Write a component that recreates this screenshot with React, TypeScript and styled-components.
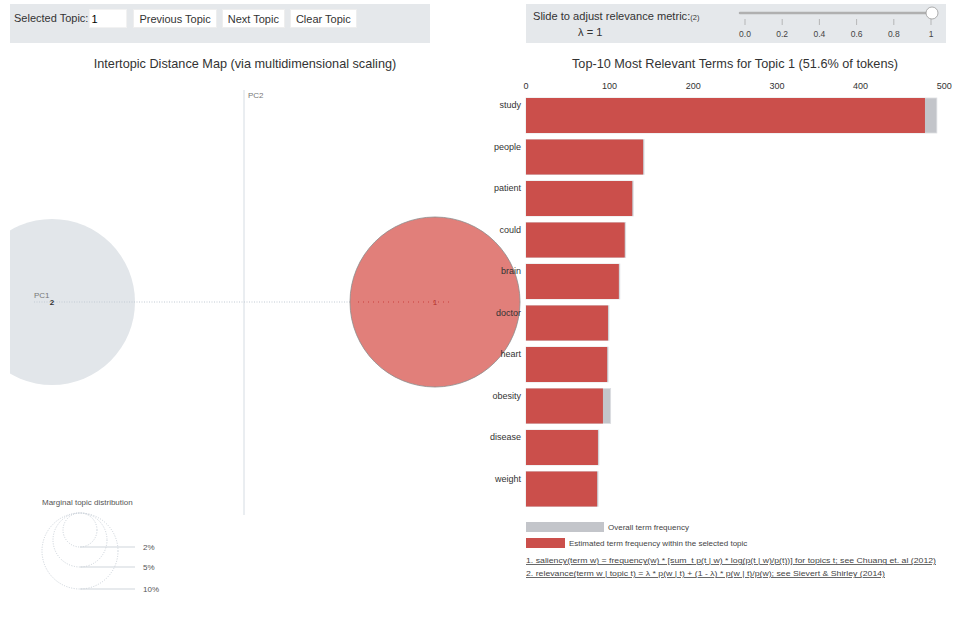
import React from "react";
import styled, { createGlobalStyle } from "styled-components";

const GlobalStyle = createGlobalStyle`
  body {
    margin: 0;
    background: #fff;
    font-family: "Liberation Sans", Arial, sans-serif;
    color: #333;
  }
`;

const Page = styled.div`
  width: 960px;
  height: 620px;
  overflow: hidden;
`;

const Header = styled.div`
  display: flex;
  gap: 96px;
  padding: 4px 0 0 10px;
`;

const ControlPanel = styled.div`
  width: 420px;
  height: 39px;
  box-sizing: border-box;
  background: #e5e8eb;
  display: flex;
  align-items: flex-start;
  padding: 5px 0 0 4px;
`;

const Label = styled.span`
  font-size: 11px;
  line-height: 19px;
  margin-right: 1px;
`;

const TopicInput = styled.input`
  width: 38px;
  height: 19px;
  box-sizing: border-box;
  border: 1px solid #f2f2f2;
  background: #fff;
  font: 11px "Liberation Sans", Arial, sans-serif;
  padding: 0 1px;
  margin-right: 6px;
  outline: none;
`;

const TopicButton = styled.button`
  height: 19px;
  border: 1px solid #eee;
  background: #fff;
  font: 11px "Liberation Sans", Arial, sans-serif;
  color: #333;
  padding: 0 5px;
  margin-right: 5px;
`;

const RelevanceText = styled.div`
  display: flex;
  flex-direction: column;
  padding-left: 3px;
  font-size: 11.1px;
  line-height: 15px;
`;

const Note = styled.span`
  font-size: 7.5px;
`;

const Lambda = styled.span`
  padding-left: 45px;
`;

const SliderSvg = styled.svg`
  display: block;
  margin-left: auto;
  margin-top: -5px;
`;

const Main = styled.div`
  display: flex;
`;

const Column = styled.section<{ $inset: number }>`
  width: 480px;
  box-sizing: border-box;
  padding-left: ${(p) => p.$inset}px;
  display: flex;
  flex-direction: column;
`;

const Title = styled.div<{ $shift: number }>`
  margin-top: 13px;
  height: 16px;
  line-height: 16px;
  text-align: center;
  font-size: 12.7px;
  color: #333;
  padding-left: ${(p) => p.$shift}px;
`;

const PlotSvg = styled.svg`
  display: block;
  overflow: visible;
  font-family: "Liberation Sans", Arial, sans-serif;
`;

const terms: [string, number, number][] = [
  ["study", 477, 490],
  ["people", 140, 140],
  ["patient", 127, 127],
  ["could", 118, 118],
  ["brain", 111, 111],
  ["doctor", 98, 98],
  ["heart", 97, 97],
  ["obesity", 92, 100],
  ["disease", 86, 86],
  ["weight", 85, 85],
];

const X0 = 526;
const SCALE = 0.8364;
const ticks = [0, 0.2, 0.4, 0.6, 0.8, 1];

const Slider = () => (
  <SliderSvg width={210} height={39} viewBox="736 4 210 39">
    <line x1={740} y1={13} x2={930} y2={13} stroke="#b0b0b0" strokeWidth={2.5} strokeLinecap="round" />
    {ticks.map((t, i) => {
      const x = 745 + i * 37.2;
      return (
        <g key={t}>
          <line x1={x} y1={19} x2={x} y2={25} stroke="#aaa" strokeWidth={0.8} />
          <text x={x} y={37} fontSize={8.5} textAnchor="middle" fill="#444">
            {t === 0 ? "0.0" : t === 1 ? "1" : t.toFixed(1)}
          </text>
        </g>
      );
    })}
    <circle cx={932} cy={13} r={6} fill="#fff" stroke="#999" strokeWidth={0.8} />
  </SliderSvg>
);

const TopicMap = () => (
  <PlotSvg width={470} height={530} viewBox="10 72 470 530">
    <defs>
      <clipPath id="mapClip">
        <rect x={10} y={72} width={600} height={530} />
      </clipPath>
    </defs>
    <line x1={244} y1={90} x2={244} y2={515} stroke="#d5dce3" strokeWidth={1} />
    <text x={248} y={98} fontSize={8} fill="#777">PC2</text>
    <circle cx={52} cy={302} r={83} fill="#e2e6ea" clipPath="url(#mapClip)" />
    <line x1={34} y1={302} x2={480} y2={302} stroke="#c2cbd4" strokeWidth={1} strokeDasharray="1 1.5" />
    <text x={34} y={298} fontSize={8} fill="#777">PC1</text>
    <text x={52} y={305} fontSize={8} fontWeight="bold" fill="#333" textAnchor="middle">2</text>
    <circle cx={435} cy={302} r={85} fill="#e07b76" fillOpacity={0.97} stroke="#8a8a8a" strokeWidth={0.8} />
    <line x1={358} y1={302} x2={449} y2={302} stroke="#c9413d" strokeWidth={1} strokeDasharray="1 4" />
    <text x={435} y={305} fontSize={8} fill="#b2302d" textAnchor="middle">1</text>

    <text x={42} y={505} fontSize={8} fill="#555">Marginal topic distribution</text>
    {[
      { r: 17, label: "2%", y: 547 },
      { r: 27, label: "5%", y: 567 },
      { r: 38, label: "10%", y: 589 },
    ].map((c) => (
      <g key={c.label}>
        <circle cx={80} cy={513 + c.r} r={c.r} fill="none" stroke="#c9d0d8" strokeWidth={1} strokeDasharray="1 1.5" />
        <line x1={80} y1={c.y} x2={135} y2={c.y} stroke="#cfd5db" strokeWidth={1} />
        <text x={143} y={c.y + 3} fontSize={8} fill="#555">{c.label}</text>
      </g>
    ))}
  </PlotSvg>
);

const TermChart = () => (
  <PlotSvg width={480} height={530} viewBox="480 72 480 530">
    {[0, 100, 200, 300, 400, 500].map((v) => (
      <text key={v} x={X0 + v * SCALE} y={89} fontSize={9} textAnchor="middle" fill="#333">
        {v}
      </text>
    ))}
    {terms.map(([term, est, total], i) => {
      const y = 98 + i * 41.5;
      return (
        <g key={term}>
          <rect x={X0} y={y} width={total * SCALE + 1} height={35} fill="#c3c5ca" stroke="#dcdee2" strokeWidth={0.8} />
          <rect x={X0} y={y} width={est * SCALE} height={35} fill="#cb4f4b" />
          <text x={521} y={y + 10} fontSize={9} textAnchor="end" fill="#333">
            {term}
          </text>
        </g>
      );
    })}

    <rect x={526} y={522} width={78} height={10} fill="#c3c5ca" />
    <text x={608} y={530} fontSize={8} fill="#444">Overall term frequency</text>
    <rect x={526} y={538} width={39} height={10} fill="#cb4f4b" />
    <text x={569} y={546} fontSize={8} fill="#444">Estimated term frequency within the selected topic</text>
    <text x={526} y={563} fontSize={8} fill="#444" textDecoration="underline" textLength={410} lengthAdjust="spacingAndGlyphs">
      1. saliency(term w) = frequency(w) * [sum_t p(t | w) * log(p(t | w)/p(t))] for topics t; see Chuang et. al (2012)
    </text>
    <text x={526} y={576} fontSize={8} fill="#444" textDecoration="underline" textLength={359} lengthAdjust="spacingAndGlyphs">
      2. relevance(term w | topic t) = λ * p(w | t) + (1 - λ) * p(w | t)/p(w); see Sievert &amp; Shirley (2014)
    </text>
  </PlotSvg>
);

export default function App() {
  return (
    <Page>
      <GlobalStyle />
      <Header>
        <ControlPanel>
          <Label>Selected Topic:</Label>
          <TopicInput defaultValue="1" />
          <TopicButton>Previous Topic</TopicButton>
          <TopicButton>Next Topic</TopicButton>
          <TopicButton>Clear Topic</TopicButton>
        </ControlPanel>
        <ControlPanel>
          <RelevanceText>
            <span>
              Slide to adjust relevance metric:<Note>(2)</Note>
            </span>
            <Lambda>λ = 1</Lambda>
          </RelevanceText>
          <Slider />
        </ControlPanel>
      </Header>
      <Main>
        <Column $inset={10}>
          <Title $shift={0}>Intertopic Distance Map (via multidimensional scaling)</Title>
          <TopicMap />
        </Column>
        <Column $inset={0}>
          <Title $shift={30}>Top-10 Most Relevant Terms for Topic 1 (51.6% of tokens)</Title>
          <TermChart />
        </Column>
      </Main>
    </Page>
  );
}
